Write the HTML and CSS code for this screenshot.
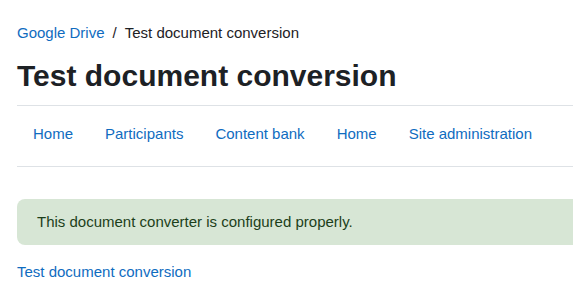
FILE: index.html
```html
<!DOCTYPE html>
<html>
<head>
  <title>Test document conversion</title>
  <link rel="stylesheet" href="styles.css">
</head>
<body>
  <div class="page">
    <div class="page-header">
      <nav class="breadcrumb">
        <a href="#">Google Drive</a>
        <span class="divider">/</span>
        <span>Test document conversion</span>
      </nav>
      <h1>Test document conversion</h1>
    </div>

    <div class="secondary-nav">
      <a href="#" class="nav-link">Home</a>
      <a href="#" class="nav-link">Participants</a>
      <a href="#" class="nav-link">Content bank</a>
      <a href="#" class="nav-link">Home</a>
      <a href="#" class="nav-link">Site administration</a>
    </div>

    <div class="main">
      <div class="alert-success">This document converter is configured properly.</div>
      <a href="#" class="test-link">Test document conversion</a>
    </div>
  </div>
</body>
</html>
```

FILE: styles.css
```css
html, body {
  margin: 0;
  padding: 0;
  overflow: hidden;
}
body {
  font-family: "Liberation Sans", Arial, sans-serif;
  font-size: 15px;
  line-height: 1.5;
  color: #1d2125;
  background-color: white;
}
a {
  color: #0f6cbf;
  text-decoration: none;
}
.page {
  width: 640px;
  padding: 22px 0 0 17px;
}
.breadcrumb {
  display: flex;
  align-items: center;
}
.breadcrumb .divider {
  padding: 0 8px;
}
h1 {
  font-size: 30px;
  font-weight: bold;
  line-height: 1.2;
  margin: 13px 0 0 0;
  padding-bottom: 11px;
  border-bottom: 1px solid #dee2e6;
}
.secondary-nav {
  display: flex;
  border-bottom: 1px solid #dee2e6;
}
.nav-link {
  height: 57px;
  display: flex;
  align-items: center;
  padding: 0 16px;
  border-bottom: 3px solid transparent;
}
.main {
  padding-top: 32px;
}
.alert-success {
  background-color: #d7e6d5;
  color: #1c3f1a;
  padding: 12px 20px;
  border-radius: 8px;
  margin-bottom: 16px;
}
.test-link {
  display: block;
}
```
